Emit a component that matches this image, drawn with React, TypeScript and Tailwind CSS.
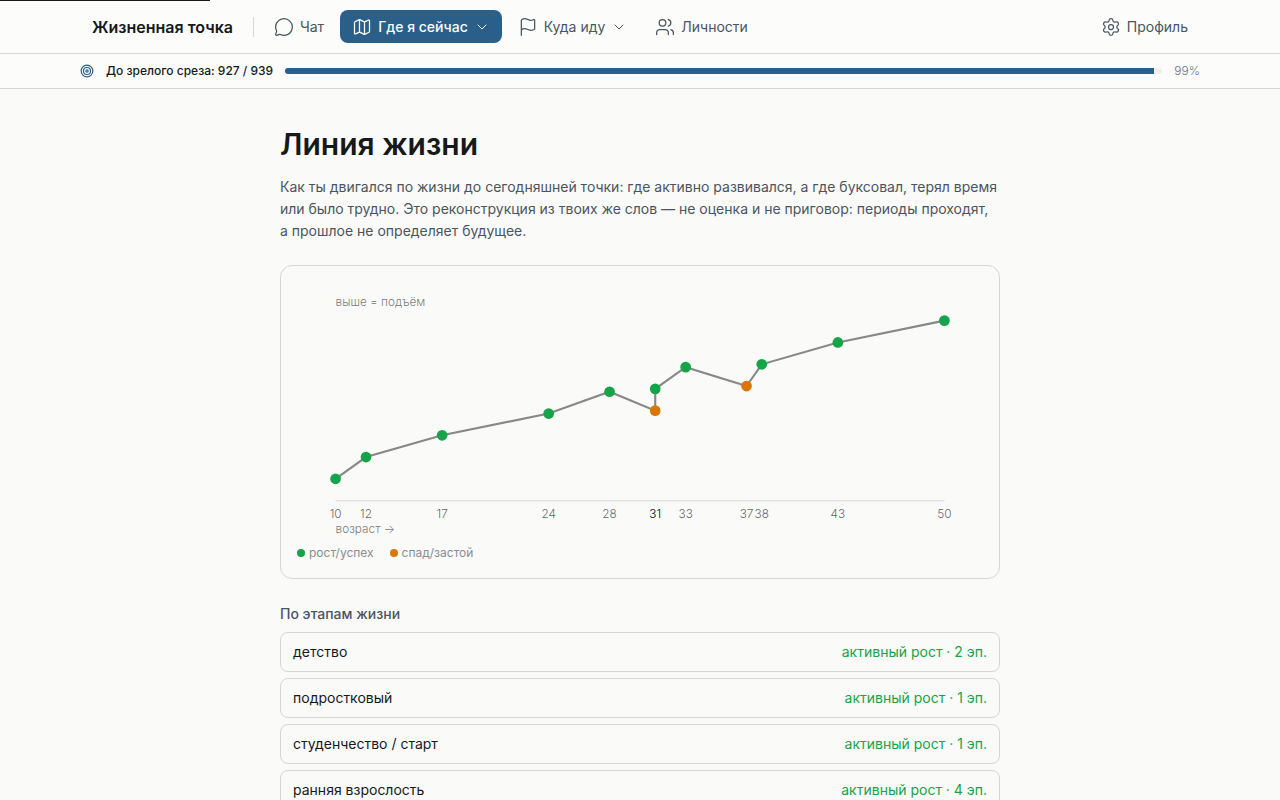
import { ChevronDown, Flag, Map, MessageCircle, Settings, Target, Users } from "lucide-react";
import type { LucideIcon } from "lucide-react";

type Point = { age: number; y: number; kind: "up" | "down" };

const points: Point[] = [
  { age: 10, y: 183.6, kind: "up" },
  { age: 12, y: 163.3, kind: "up" },
  { age: 17, y: 143, kind: "up" },
  { age: 24, y: 122.7, kind: "up" },
  { age: 28, y: 102.4, kind: "up" },
  { age: 31, y: 120, kind: "down" },
  { age: 31, y: 99.7, kind: "up" },
  { age: 33, y: 79.4, kind: "up" },
  { age: 37, y: 97.1, kind: "down" },
  { age: 38, y: 76.8, kind: "up" },
  { age: 43, y: 56.4, kind: "up" },
  { age: 50, y: 36, kind: "up" },
];

const stages = [
  { name: "детство", episodes: 2 },
  { name: "подростковый", episodes: 1 },
  { name: "студенчество / старт", episodes: 1 },
  { name: "ранняя взрослость", episodes: 4 },
];

const WIDTH = 640;
const HEIGHT = 240;
const PAD = 36;

const xFor = (age: number) => PAD + ((age - 10) / 40) * (WIDTH - PAD * 2);

type NavItemProps = {
  icon: LucideIcon;
  label: string;
  active?: boolean;
  menu?: boolean;
};

const NavItem = ({ icon: Icon, label, active, menu }: NavItemProps) => {
  const className = `flex h-[33px] items-center gap-1.5 rounded-lg px-3 text-sm ${
    active ? "bg-[#2a5f8a] font-medium text-[#fcfcfa]" : "text-[#4a5560]"
  }`;
  const content = (
    <>
      <Icon className="h-5 w-5" strokeWidth={1.5} />
      <span>{label}</span>
      {menu && <ChevronDown className="h-4 w-4" strokeWidth={1.5} />}
    </>
  );

  return menu ? (
    <button aria-haspopup="menu" className={className} type="button">
      {content}
    </button>
  ) : (
    <a className={className} href="#">
      {content}
    </a>
  );
};

const Header = () => (
  <header className="border-b border-[#d6d8d6] bg-[#fcfcfa]">
    <div className="mx-auto flex max-w-[1120px] items-center justify-between py-2.5">
      <nav className="flex items-center gap-1">
        <a className="px-3 text-base font-semibold text-[#15191c]" href="#">
          Жизненная точка
        </a>
        <div className="mx-1 h-5 w-px bg-[#d6d8d6]" />
        <NavItem icon={MessageCircle} label="Чат" />
        <NavItem active icon={Map} label="Где я сейчас" menu />
        <NavItem icon={Flag} label="Куда иду" menu />
        <NavItem icon={Users} label="Личности" />
      </nav>
      <NavItem icon={Settings} label="Профиль" />
    </div>
  </header>
);

const ProgressRow = () => (
  <div className="border-b border-[#d6d8d6] bg-[#fcfcfa]">
    <div className="mx-auto flex max-w-[1120px] items-center gap-3 py-[9px] text-xs">
      <Target className="h-3.5 w-3.5 text-[#2a5f8a]" />
      <span className="font-medium text-[#15191c]">До зрелого среза: 927 / 939</span>
      <div className="h-1.5 flex-1 overflow-hidden rounded-full bg-[#f0efed]">
        <div className="h-full bg-[#2a5f8a]" style={{ width: "99%" }} />
      </div>
      <span className="font-light text-[#6b757d]">99%</span>
    </div>
  </div>
);

const LifeChart = () => (
  <svg
    aria-label="Линия жизни"
    className="w-full"
    role="img"
    viewBox={`0 0 ${WIDTH} ${HEIGHT}`}
  >
    <line stroke="#15191c" strokeOpacity={0.15} x1={PAD} x2={WIDTH - PAD} y1={204} y2={204} />
    <g className="font-light" fill="#15191c" fillOpacity={0.6} fontSize={11}>
      <text x={PAD} y={22}>
        выше = подъём
      </text>
      <text x={PAD} y={234}>
        возраст →
      </text>
    </g>
    <polyline
      fill="none"
      points={points.map((p) => `${xFor(p.age)},${p.y}`).join(" ")}
      stroke="#888888"
      strokeWidth={2}
    />
    {points.map((p, i) => (
      <g key={i}>
        <circle cx={xFor(p.age)} cy={p.y} fill={p.kind === "up" ? "#16a34a" : "#d97706"} r={5} />
        <text
          className="font-light"
          fill="#15191c"
          fillOpacity={0.7}
          fontSize={11}
          textAnchor="middle"
          x={xFor(p.age)}
          y={220}
        >
          {p.age}
        </text>
      </g>
    ))}
  </svg>
);

export default function App() {
  return (
    <div className="relative min-h-screen bg-[#fafaf8] font-['Inter',sans-serif] text-[#15191c]">
      <div className="absolute left-0 top-0 h-px w-[210px] bg-[#15191c]" />
      <Header />
      <ProgressRow />
      <main className="mx-auto max-w-[720px] pb-10 pt-[35px]">
        <h1 className="text-3xl font-semibold leading-10">Линия жизни</h1>
        <p className="mt-3 text-sm leading-[22px] text-[#4a5560]">
          Как ты двигался по жизни до сегодняшней точки: где активно развивался, а где буксовал,
          терял время или было трудно. Это реконструкция из твоих же слов — не оценка и не
          приговор: периоды проходят, а прошлое не определяет будущее.
        </p>

        <section className="mt-[23px] rounded-xl border border-[#d6d8d6] p-4">
          <LifeChart />
          <div className="mt-1 flex gap-4 text-xs leading-[19px] text-[#868e94]">
            <span className="flex items-center gap-1">
              <i className="h-2 w-2 rounded-full bg-[#16a34a]" />
              рост/успех
            </span>
            <span className="flex items-center gap-1">
              <i className="h-2 w-2 rounded-full bg-[#d97706]" />
              спад/застой
            </span>
          </div>
        </section>

        <h2 className="mt-6 text-sm font-medium leading-[21px] text-[#4a5560]">По этапам жизни</h2>
        <ul className="mt-2 flex flex-col gap-1.5">
          {stages.map((stage) => (
            <li
              className="flex items-center justify-between rounded-lg border border-[#d6d8d6] px-3 py-2 text-sm leading-[22px]"
              key={stage.name}
            >
              <span>{stage.name}</span>
              <span className="text-[#16a34a]">активный рост · {stage.episodes} эп.</span>
            </li>
          ))}
        </ul>
      </main>
    </div>
  );
}
